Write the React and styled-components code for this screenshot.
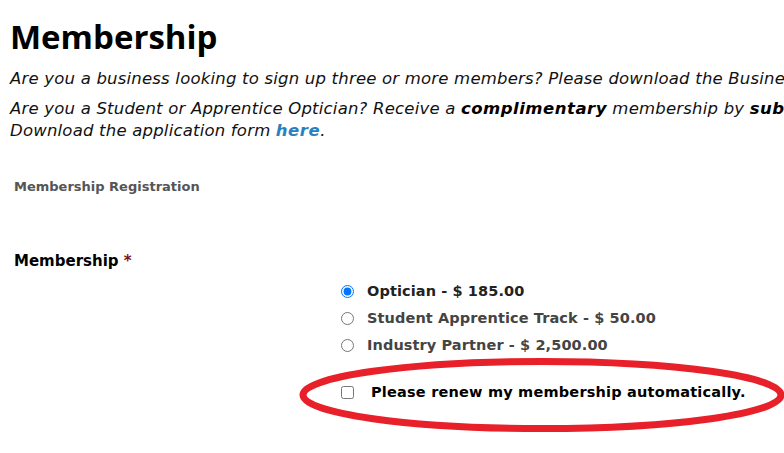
import styled, { createGlobalStyle } from "styled-components";

const Global = createGlobalStyle`
  html, body {
    margin: 0;
    padding: 0;
    background: #fff;
    overflow: hidden;
  }
  body {
    font-family: "DejaVu Sans", "Open Sans", sans-serif;
    color: #111;
  }
`

const Page = styled.div`
  position: relative;
  width: 784px;
  height: 453px;
  overflow: hidden;
  padding: 14px 0 0 10px;
  box-sizing: border-box;
`

const Titulo = styled.h1`
  margin: 0;
  font-family: "Open Sans", sans-serif;
  font-size: 33px;
  font-weight: 700;
  line-height: 46px;
  color: #000;
`

const Parrafo = styled.p`
  margin: ${p => p.margin || "0"};
  font-size: 16.5px;
  font-style: italic;
  line-height: 22px;
  letter-spacing: 0.2px;
  white-space: nowrap;
  color: #111;

  b { font-weight: 700; color: #000; letter-spacing: 0.5px; }
  a { color: #2a7fc1; font-weight: 700; text-decoration: none; letter-spacing: 0.5px; }
`

const Seccion = styled.div`
  padding-left: 4px;
  margin-top: 37px;
  font-size: 13px;
  font-weight: 700;
  color: #555;
`

const Etiqueta = styled.div`
  padding-left: 4px;
  margin-top: 58px;
  font-size: 15px;
  font-weight: 700;
  color: #000;

  span { color: #7a1414; }
`

const Opciones = styled.div`
  display: flex;
  flex-direction: column;
  gap: 5px;
  margin: 10px 0 0 331px;
`

const Opcion = styled.label`
  display: flex;
  align-items: center;
  gap: 13px;
  height: 22px;
  font-size: 14.5px;
  font-weight: 700;
  letter-spacing: 0.1px;
  color: ${p => (p.checked ? "#222" : "#444")};

  input {
    margin: 0;
    width: 13px;
    height: 13px;
  }
`

const Renovar = styled.label`
  display: flex;
  align-items: center;
  gap: 17px;
  margin: 28px 0 0 331px;
  font-size: 14.5px;
  font-weight: 700;
  letter-spacing: 0.2px;
  color: #000;

  input {
    margin: 0;
    width: 13px;
    height: 13px;
  }
`

const Marca = styled.svg`
  position: absolute;
  left: 298px;
  top: 355px;
  width: 490px;
  height: 80px;
  pointer-events: none;
`

const planes = [
  { nombre: "Optician", precio: "$ 185.00", checked: true },
  { nombre: "Student Apprentice Track", precio: "$ 50.00" },
  { nombre: "Industry Partner", precio: "$ 2,500.00" },
]

export default function App() {
  return (
    <Page>
      <Global />
      <Titulo>Membership</Titulo>
      <Parrafo margin="8px 0 0">
        Are you a business looking to sign up three or more members? Please download the Business Membership form here.
      </Parrafo>
      <Parrafo margin="8px 0 0">
        Are you a Student or Apprentice Optician? Receive a <b>complimentary</b> membership by <b>submitting</b> the form.
      </Parrafo>
      <Parrafo>
        Download the application form <a href="#">here</a>.
      </Parrafo>

      <Seccion>Membership Registration</Seccion>
      <Etiqueta>Membership <span>*</span></Etiqueta>

      <Opciones>
        {planes.map(p => (
          <Opcion key={p.nombre} checked={p.checked}>
            <input type="radio" name="plan" defaultChecked={p.checked} />
            {p.nombre} - {p.precio}
          </Opcion>
        ))}
      </Opciones>

      <Renovar>
        <input type="checkbox" />
        Please renew my membership automatically.
      </Renovar>

      <Marca viewBox="0 0 490 80">
        <ellipse cx="244" cy="40" rx="239" ry="33.5" fill="none" stroke="#e8202a" strokeWidth="7" />
      </Marca>
    </Page>
  );
}
